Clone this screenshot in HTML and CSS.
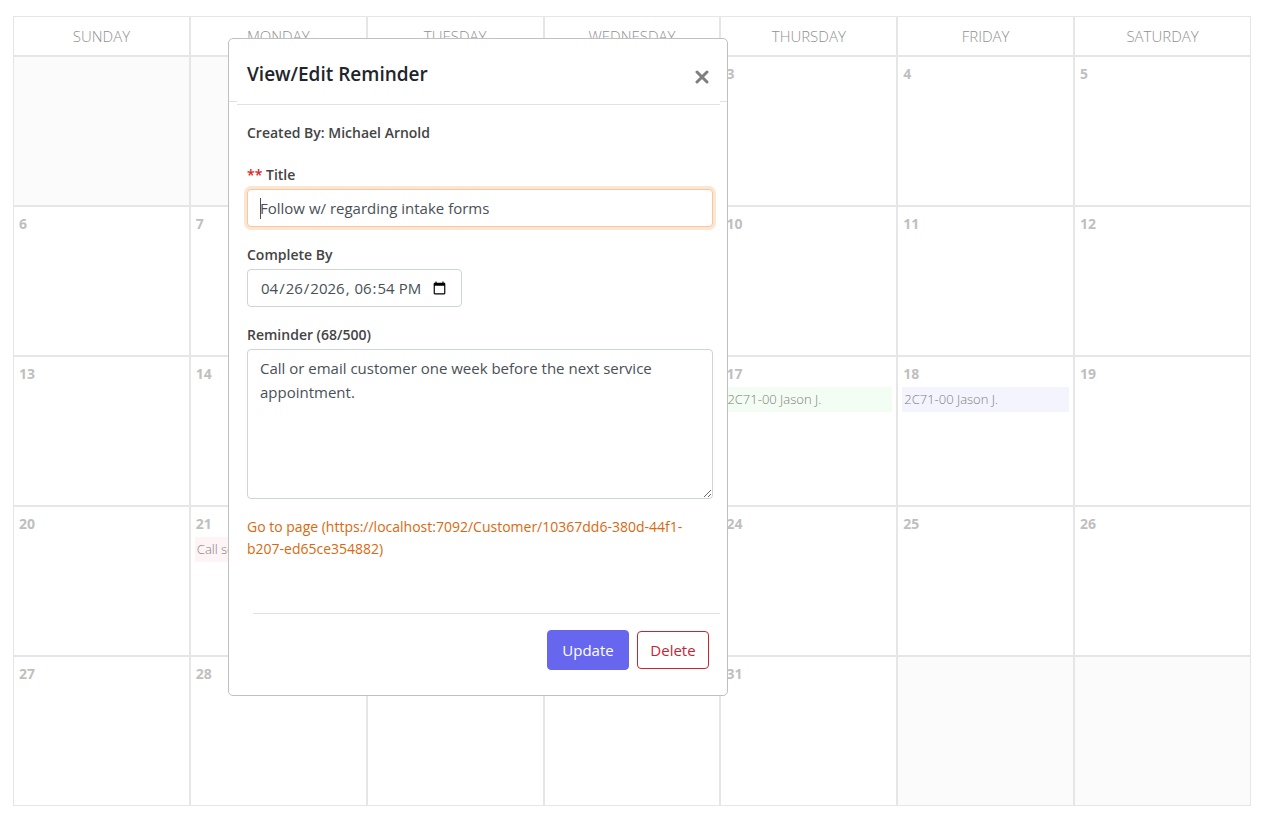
FILE: index.html
```html
<!DOCTYPE html>
<html lang="en">
<head>
    <meta charset="UTF-8" />
    <meta name="viewport" content="width=device-width, initial-scale=1.0" />
    <title>Calendar</title>
    <link rel="stylesheet" href="styles.css">
</head>
<body>
    <table class="calendar">
        <thead>
            <tr>
                <th>SUNDAY</th>
                <th>MONDAY</th>
                <th>TUESDAY</th>
                <th>WEDNESDAY</th>
                <th>THURSDAY</th>
                <th>FRIDAY</th>
                <th>SATURDAY</th>
            </tr>
        </thead>
        <tbody>
            <tr>
                <td class="empty"></td>
                <td class="empty"></td>
                <td><span class="day">1</span></td>
                <td><span class="day">2</span></td>
                <td><span class="day">3</span></td>
                <td><span class="day">4</span></td>
                <td><span class="day">5</span></td>
            </tr>
            <tr>
                <td><span class="day">6</span></td>
                <td><span class="day">7</span></td>
                <td><span class="day">8</span></td>
                <td><span class="day">9</span></td>
                <td><span class="day">10</span></td>
                <td><span class="day">11</span></td>
                <td><span class="day">12</span></td>
            </tr>
            <tr>
                <td><span class="day">13</span></td>
                <td><span class="day">14</span></td>
                <td><span class="day">15</span></td>
                <td><span class="day">16</span></td>
                <td><span class="day">17</span><div class="event green">2C71-00 Jason J.</div></td>
                <td><span class="day">18</span><div class="event blue">2C71-00 Jason J.</div></td>
                <td><span class="day">19</span></td>
            </tr>
            <tr>
                <td><span class="day">20</span></td>
                <td><span class="day">21</span><div class="event red">Call se</div></td>
                <td><span class="day">22</span></td>
                <td><span class="day">23</span></td>
                <td><span class="day">24</span></td>
                <td><span class="day">25</span></td>
                <td><span class="day">26</span></td>
            </tr>
            <tr>
                <td><span class="day">27</span></td>
                <td><span class="day">28</span></td>
                <td><span class="day">29</span></td>
                <td><span class="day">30</span></td>
                <td><span class="day">31</span></td>
                <td class="empty"></td>
                <td class="empty"></td>
            </tr>
        </tbody>
    </table>

    <div class="modal" role="dialog" aria-labelledby="modal-title">
        <div class="modal-header">
            <h2 id="modal-title">View/Edit Reminder</h2>
            <button type="button" class="close" aria-label="Close">
                <svg width="14" height="14" viewBox="0 0 14 14"><path d="M2 2L12 12M12 2L2 12" stroke="#7f7f7f" stroke-width="3" stroke-linecap="round" /></svg>
            </button>
        </div>
        <form class="modal-body">
            <p class="created">Created By: Michael Arnold</p>
            <div class="field">
                <label for="title"><span class="required">**</span> Title</label>
                <input type="text" id="title" class="control active" value="Follow w/ regarding intake forms" />
            </div>
            <div class="field">
                <label for="complete-by">Complete By</label>
                <input type="datetime-local" id="complete-by" class="control date" value="2026-04-26T18:54" />
            </div>
            <div class="field">
                <label for="reminder">Reminder (68/500)</label>
                <textarea id="reminder" class="control" maxlength="500">Call or email customer one week before the next service appointment.</textarea>
            </div>
            <a class="page-link" href="#">Go to page (https://localhost:7092/Customer/10367dd6-380d-44f1-b207-ed65ce354882)</a>
            <div class="modal-footer">
                <button type="submit" class="btn btn-update">Update</button>
                <button type="button" class="btn btn-delete">Delete</button>
            </div>
        </form>
    </div>
</body>
</html>
```
FILE: styles.css
```css
* {
    box-sizing: border-box;
}
body {
    margin: 0;
    padding: 16px 14px 8px 13px;
    background: #fff;
    font-family: "Segoe UI", "Open Sans", "Noto Sans", sans-serif;
    font-size: 15px;
    color: #495057;
}

/* calendar */
.calendar {
    width: 100%;
    table-layout: fixed;
    border-collapse: separate;
    border-spacing: 0;
    border: 0;
}
.calendar th {
    height: 40px;
    padding: 0;
    border: 1px solid #e6e6e6;
    font-size: 15px;
    font-weight: 300;
    color: #909090;
}
.calendar td {
    height: 150px;
    padding: 5px 4px;
    border: 1px solid #e6e6e6;
    vertical-align: top;
}
.calendar .empty {
    background: #fbfbfb;
}
.day {
    display: block;
    padding-left: 1px;
    font-size: 14px;
    line-height: 24px;
    font-weight: 700;
    color: #bfbfbf;
}
.event {
    height: 25px;
    margin-top: 1px;
    padding: 0 2px;
    font-size: 13px;
    line-height: 25px;
    font-weight: 300;
    color: #808080;
    white-space: nowrap;
    overflow: hidden;
}
.green {
    background: #f3fdf3;
}
.blue {
    background: #f4f4ff;
}
.red {
    background: #fff4f5;
}

/* reminder dialog */
.modal {
    position: absolute;
    top: 38px;
    left: 228px;
    width: 500px;
    background: #fff;
    border: 1px solid #bfc0c1;
    border-radius: 5px;
}
.modal-header {
    display: flex;
    justify-content: space-between;
    align-items: center;
    height: 63px;
    padding: 8px 18px 0;
    border-bottom: 1px solid #dee2e6;
}
.modal-header h2 {
    margin: 0;
    font-size: 19px;
    line-height: 28px;
    font-weight: 600;
    color: #212529;
}
.close {
    display: flex;
    padding: 6px 0 0;
    border: 0;
    background: none;
    cursor: pointer;
}
.modal-body {
    position: relative;
    margin: -1px 7px 0 8px;
    padding: 3px 0 25px;
    background: #fff;
}
.created {
    margin: 0;
    padding: 17px 10px 0;
    border-top: 1px solid #dee2e6;
    font-size: 14px;
    line-height: 22px;
    font-weight: 600;
}
.created,
label {
    color: #444;
}
.field {
    display: flex;
    flex-direction: column;
    align-items: flex-start;
    margin: 0 7px 17px 10px;
}
.created + .field {
    margin-top: 20px;
}
label {
    margin-bottom: 3px;
    font-size: 14px;
    line-height: 22px;
    font-weight: 600;
}
.required {
    color: #e02020;
}
.control {
    width: 100%;
    height: 38px;
    padding: 6px 12px;
    border: 1px solid #ced4da;
    border-radius: 4px;
    background: #fff;
    font-family: inherit;
    font-size: 15px;
    line-height: 24px;
    color: #495057;
    outline: none;
}
.control.active {
    border-color: #fac69b;
    background: linear-gradient(#495057, #495057) 12px 8px / 1px 21px no-repeat #fff;
    box-shadow: 0 0 0 3px #fde5d4;
}
.control.date {
    width: 215px;
}
textarea.control {
    height: 150px;
    resize: both;
}
.page-link {
    display: block;
    margin: 0 10px;
    font-size: 14px;
    line-height: 22px;
    color: #d9690f;
    text-decoration: none;
}
.modal-footer {
    display: flex;
    justify-content: flex-end;
    align-items: center;
    gap: 8px;
    margin: 53px 0 0 16px;
    padding: 16px 11px 0 0;
    border-top: 1px solid #dee2e6;
}
.btn {
    height: 38px;
    padding: 0;
    border: 1px solid;
    border-radius: 4px;
    font-family: inherit;
    font-size: 15px;
    line-height: 24px;
    cursor: pointer;
}
.btn-update {
    width: 82px;
    height: 40px;
    border-color: #6666ef;
    background: #6666ef;
    color: #fff;
}
.btn-delete {
    width: 72px;
    border-color: #c82333;
    background: #fff;
    color: #c82333;
}
```
